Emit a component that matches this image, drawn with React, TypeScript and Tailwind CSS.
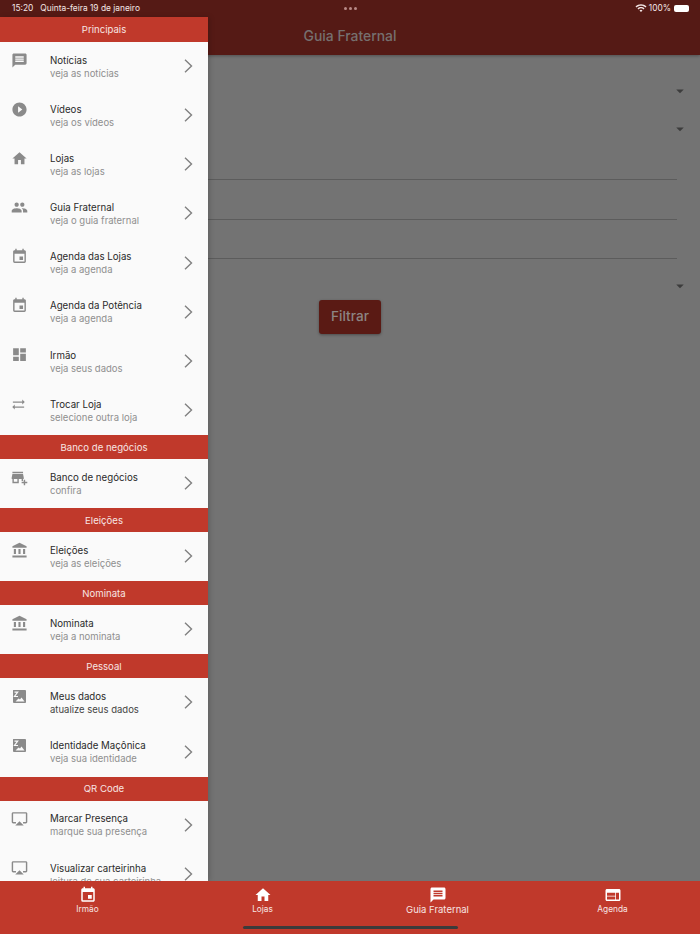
import { MdMessage, MdPlayCircleFilled, MdHome, MdPeople, MdEvent, MdDashboard, MdSyncAlt, MdAddBusiness, MdAccountBalance, MdAirplay, MdWeb, MdArrowDropDown, MdWifi } from "react-icons/md";
import type { IconType } from "react-icons";

// image icon with the torn corner, no exact match in the icon packages
const PhotoIcon: IconType = ({ className }) => (
  <svg viewBox="0 0 17 17" width={17} height={17} className={className}>
    <path fill="currentColor" d="M2 2.5C2 2 2.5 2 3 2h11c.5 0 1 .5 1 1v11c0 .5-.5 1-1 1H3c-.5 0-1-.5-1-1z" />
    <path fill="none" stroke="#fafafa" strokeWidth="1.2" d="M3.5 4.2h3.2L3.5 8.5h3.5" />
    <path fill="#fafafa" d="M4.5 13.5 7.5 10.5l1.5 1 1.5-2 3 4z" />
  </svg>
);

type Item = { icon: IconType; title: string; sub: string; dark?: boolean; small?: boolean };
type Section = { name: string; first?: boolean; items: Item[] };

const SECTIONS: Section[] = [
  {
    name: "Principais",
    first: true,
    items: [
      { icon: MdMessage, title: "Notícias", sub: "veja as notícias" },
      { icon: MdPlayCircleFilled, title: "Vídeos", sub: "veja os vídeos" },
      { icon: MdHome, title: "Lojas", sub: "veja as lojas" },
      { icon: MdPeople, title: "Guia Fraternal", sub: "veja o guia fraternal" },
      { icon: MdEvent, title: "Agenda das Lojas", sub: "veja a agenda" },
      { icon: MdEvent, title: "Agenda da Potência", sub: "veja a agenda" },
      { icon: MdDashboard, title: "Irmão", sub: "veja seus dados" },
      { icon: MdSyncAlt, title: "Trocar Loja", sub: "selecione outra loja", small: true },
    ],
  },
  { name: "Banco de negócios", items: [{ icon: MdAddBusiness, title: "Banco de negócios", sub: "confira" }] },
  { name: "Eleições", items: [{ icon: MdAccountBalance, title: "Eleições", sub: "veja as eleições" }] },
  { name: "Nominata", items: [{ icon: MdAccountBalance, title: "Nominata", sub: "veja a nominata" }] },
  {
    name: "Pessoal",
    items: [
      { icon: PhotoIcon, title: "Meus dados", sub: "atualize seus dados", dark: true },
      { icon: PhotoIcon, title: "Identidade Maçônica", sub: "veja sua identidade" },
    ],
  },
  {
    name: "QR Code",
    items: [
      { icon: MdAirplay, title: "Marcar Presença", sub: "marque sua presença" },
      { icon: MdAirplay, title: "Visualizar carteirinha", sub: "leitura de sua carteirinha" },
    ],
  },
];

function Row({ item }: { item: Item }) {
  const Icon = item.icon;
  return (
    <div className="flex h-[49.14px] shrink-0 items-start">
      <div className="ml-[11px] mt-[9.5px] flex h-[17px] w-[39px] items-center">
        <Icon size={item.small ? 15 : 17} className={`text-[#8a8a8a] ${item.small ? "translate-y-[1px]" : ""}`} />
      </div>
      <div className="mt-[11.8px] flex-1 whitespace-nowrap">
        <div className="text-[9.7px] leading-[13px] text-[#2a2a2a]">{item.title}</div>
        <div className={`text-[9.5px] leading-[14px] ${item.dark ? "text-[#444444]" : "text-[#8f8f8f]"}`}>{item.sub}</div>
      </div>
      <svg viewBox="0 0 9 14" className="mr-[15px] mt-[17px] h-[14px] w-[9px] shrink-0" fill="none" stroke="#808080" strokeWidth="1.4">
        <path d="M1 .8 7.5 7 1 13.2" />
      </svg>
    </div>
  );
}

function Drawer() {
  return (
    <aside className="absolute left-0 top-[17px] flex h-[864px] w-[208px] flex-col overflow-hidden bg-[#fafafa] shadow-[2px_0_5px_rgba(0,0,0,0.15)]">
      {SECTIONS.map((s) => (
        <div key={s.name} className="flex flex-col">
          <div className={`flex shrink-0 items-center justify-center bg-[#c0392b] pt-[1.5px] text-[9.6px] text-[#f7e5e3] ${s.first ? "h-[25px]" : "h-[24px]"}`}>
            {s.name}
          </div>
          {s.items.map((it) => (
            <Row key={it.title} item={it} />
          ))}
        </div>
      ))}
    </aside>
  );
}

function NavItem({ icon: Icon, label, big }: { icon: IconType; label: string; big?: boolean }) {
  return (
    <div className="flex flex-1 flex-col items-center pt-[5px] text-white">
      <Icon size={18} />
      <span className={big ? "text-[9.5px] leading-[11px] text-[#f7e5e3]" : "text-[8.3px] leading-[11px] text-[#f7e5e3]"}>{label}</span>
    </div>
  );
}

function Line({ thick }: { thick?: boolean }) {
  return <div className={`ml-[208px] mr-[23px] bg-[#5c5c5c] ${thick ? "h-[1.5px]" : "h-px"}`} />;
}

function Caret() {
  return (
    <div className="flex justify-end pr-[11px]">
      <MdArrowDropDown size={18} className="text-[#3c3c3c]" />
    </div>
  );
}

export default function App() {
  return (
    <div className="relative flex h-[934px] w-[700px] flex-col overflow-hidden bg-[#737373] font-['Inter',sans-serif]">
      <header className="flex h-[55px] shrink-0 flex-col bg-[#551a15] shadow-[0_1px_3px_rgba(0,0,0,0.3)]">
        <div className="flex h-[17px] items-center justify-between pl-[12px] pr-[11px] text-[8.4px] text-[#f3e6e5]">
          <div className="flex w-[200px] gap-[7px] whitespace-nowrap">
            <span>15:20</span>
            <span>Quinta-feira 19 de janeiro</span>
          </div>
          <div className="flex gap-[2px]">
            <span className="h-[3px] w-[3px] rounded-full bg-[#b98a87]" />
            <span className="h-[3px] w-[3px] rounded-full bg-[#b98a87]" />
            <span className="h-[3px] w-[3px] rounded-full bg-[#b98a87]" />
          </div>
          <div className="flex w-[200px] items-center justify-end gap-[2px]">
            <MdWifi size={12} />
            <span>100%</span>
            <span className="ml-[1px] h-[7px] w-[15px] rounded-[2px] bg-white" />
          </div>
        </div>
        <div className="flex flex-1 items-center justify-center pt-[1px] text-[13.9px] font-medium text-[#76706f]">Guia Fraternal</div>
      </header>

      <main className="flex flex-1 flex-col">
        <div className="mt-[27px]"><Caret /></div>
        <div className="mt-[20px]"><Caret /></div>
        <div className="mt-[41px]"><Line /></div>
        <div className="mt-[38.5px]"><Line thick /></div>
        <div className="mt-[38px]"><Line /></div>
        <div className="mt-[17.5px]"><Caret /></div>
        <div className="mt-[5px] flex justify-center">
          <button className="h-[34px] w-[62px] rounded-[3px] bg-[#5a1a14] text-[13.6px] font-medium text-[#8c8583] shadow-[0_1px_3px_rgba(0,0,0,0.35)]">Filtrar</button>
        </div>
      </main>

      <Drawer />

      <nav className="relative z-10 flex h-[53px] shrink-0 bg-[#c0392b]">
        <NavItem icon={MdEvent} label="Irmão" />
        <NavItem icon={MdHome} label="Lojas" />
        <NavItem icon={MdMessage} label="Guia Fraternal" big />
        <NavItem icon={MdWeb} label="Agenda" />
        <div className="absolute bottom-[5px] left-[243px] h-[3px] w-[215px] rounded-full bg-[#3b3b3b]" />
      </nav>
    </div>
  );
}
